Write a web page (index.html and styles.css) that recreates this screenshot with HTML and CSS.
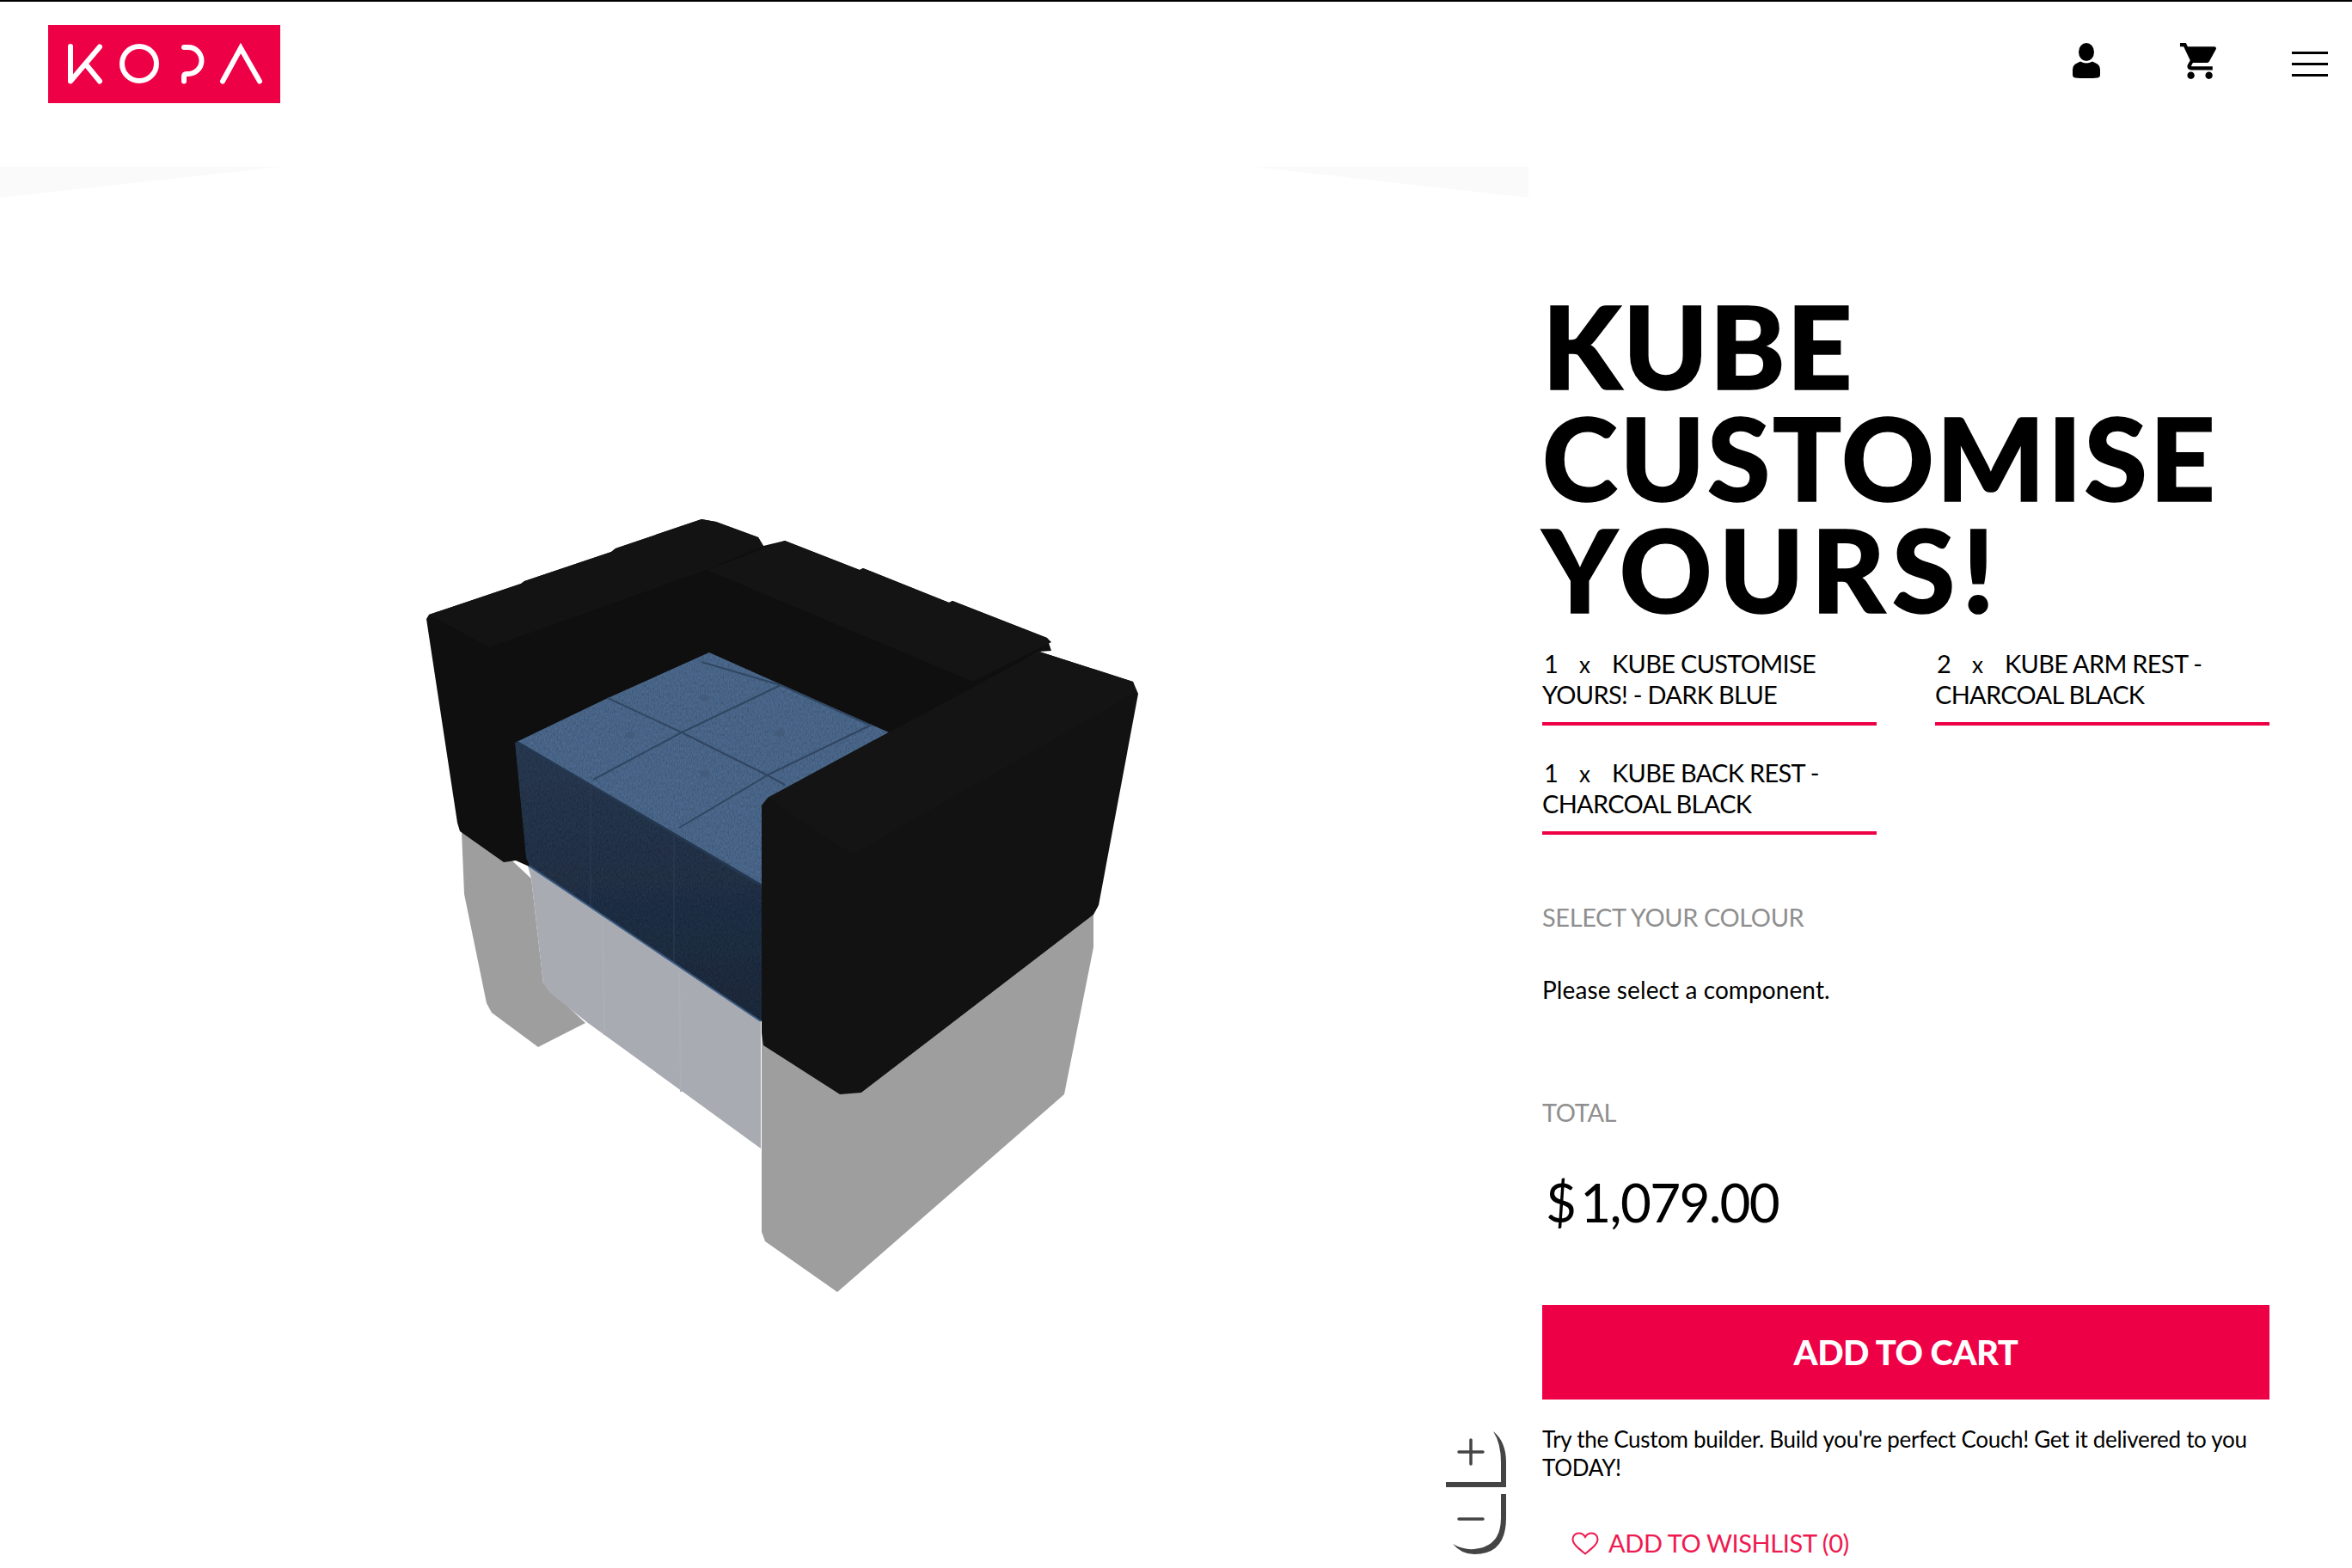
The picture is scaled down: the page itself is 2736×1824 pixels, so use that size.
FILE: index.html
```html
<!DOCTYPE html>
<html lang="en">
<head>
<meta charset="utf-8">
<title>KUBE CUSTOMISE YOURS!</title>
<link rel="stylesheet" href="styles.css">
</head>
<body>
<header class="site-header">
  <a class="logo" href="#" aria-label="KOPA">
    <svg class="logo-svg" viewBox="56 29 270 91" width="270" height="91">
      <rect x="56" y="29" width="270" height="91" fill="#ee0046"/>
      <g fill="none" stroke="#fff" stroke-width="6" stroke-linecap="round" stroke-linejoin="round">
        <path d="M82 54V94.500L116 54.500M100 75L116 94.500"/>
        <circle cx="162" cy="74" r="20"/>
        <path d="M214 55H219A15.500 15.500 0 0 1 219 86H217Q214 86 214 89V94.500"/>
      </g>
      <path d="M259 94.500L280 56L302 94.500" fill="none" stroke="#fff" stroke-width="6" stroke-linecap="round" stroke-linejoin="miter"/>
    </svg>
  </a>
  <nav class="header-icons">
    <svg class="icon-user" viewBox="0 0 32 41" width="32" height="41"><ellipse cx="16" cy="10.500" rx="9" ry="10.500"/><path d="M9 21.500Q16 25.500 23 21.500L27 23.500Q32 25.500 32 31V37Q32 40 29 40.500Q16 42 3 40.500Q0 40 0 37V31Q0 25.500 5 23.500Z"/></svg>
    <svg class="icon-cart" viewBox="1 2 20 20" width="42" height="42"><path d="M7 18c-1.100 0-1.990.900-1.990 2S5.900 22 7 22s2-.900 2-2-.900-2-2-2zM1 2v2h2l3.600 7.590-1.350 2.450c-.160.280-.250.610-.250.960 0 1.100.900 2 2 2h12v-2H7.420c-.140 0-.250-.110-.250-.250l.030-.120.900-1.630h7.450c.750 0 1.410-.410 1.750-1.030l3.580-6.490c.080-.140.120-.310.120-.480 0-.550-.450-1-1-1H5.210l-.940-2H1zm16 16c-1.100 0-1.990.900-1.990 2s.890 2 1.990 2 2-.900 2-2-.900-2-2-2z"/></svg>
    <div class="burger"><span></span><span></span><span></span></div>
  </nav>
</header>

<main class="product">
  <section class="stage">
    <svg class="viewer" viewBox="0 194 1778 1630" width="1778" height="1630">
      <defs>
        <filter id="fabric" x="0" y="0" width="100%" height="100%">
          <feTurbulence type="fractalNoise" baseFrequency="0.7 0.3" numOctaves="2" seed="4" result="n"/>
          <feColorMatrix in="n" type="matrix" values="0 0 0 0 0  0 0 0 0 0  0 0 0 0 0  0.700 0 0 0 -0.220" result="d"/>
          <feComposite in="d" in2="SourceGraphic" operator="in" result="c"/>
          <feMerge><feMergeNode in="SourceGraphic"/><feMergeNode in="c"/></feMerge>
        </filter>
        <linearGradient id="frontGrad" x1="0" y1="0" x2="0" y2="1">
          <stop offset="0" stop-color="#2b3c54"/><stop offset="1" stop-color="#1f2c3f"/>
        </linearGradient>
      </defs>
      <polygon points="0,194 326,194 0,230" fill="#fafafa"/>
      <polygon points="1457,194 1778,194 1778,230" fill="#fafafa"/>

      <!-- floor reflection -->
      <path d="M537 968L540 1040L566 1167L572 1178L626 1218L681 1190L632 1144L618 1022L589 995Z" fill="#9e9e9e"/>
      <path d="M612 1000L618 1022L632 1144L640 1155L684 1190L885 1336V1180Z" fill="#a8abb2"/>
      <path d="M701 1070L703 1204M790 1130L792 1270" fill="none" stroke="#abafb6" stroke-width="2"/>
      <path d="M886 1195L1002 1271L1272 1064V1102L1238 1273L974 1503L890 1444L886 1433Z" fill="#9e9e9e"/>

      <!-- rear and left body -->
      <path d="M496 720L499 715L606 679L610 676L711 642L716 638L816 604L833 607L882 625L888 635L913 629L1000 663L1004 661L1104 701L1108 699L1218 742L1223 757L1209 758L1030 860L886 940L620 1010L600 1001L586 1003L535 967L532 957Z" fill="#0f0f0f"/>
      <path d="M499 715L606 679L610 676L711 642L716 638L816 604L833 607L882 625L888 635L822 663L569 753Z" fill="#131313"/>
      <path d="M913 629L1000 663L1004 661L1104 701L1108 699L1218 742L1223 747L1132 793L822 663Z" fill="#141414"/>

      <!-- blue seat -->
      <polygon points="825,759 1034,852 896,927 886,937 886,1030 601,863 707,812" fill="#4d6a8f" filter="url(#fabric)"/>
      <path d="M599 863L886 1030V1188L617 1009L612 998Z" fill="url(#frontGrad)" filter="url(#fabric)"/>
      <g fill="none" stroke="#304762" stroke-width="2">
        <path d="M707 812L793 852L893 902L913 913"/>
        <path d="M908 797L793 852L690 907"/>
        <path d="M816 770L908 797L1011 843"/>
        <path d="M1014 843L896 900L790 963"/>
        <path d="M601 863L886 1030" stroke="#24384f" stroke-width="3"/>
        <path d="M687 915V1055M784 972V1120" stroke="#2a3d57" stroke-width="1"/>
        <path d="M615 1007L885 1188" stroke="#3a5a80"/>
      </g>
      <g fill="#435c7c">
        <ellipse cx="733" cy="855" rx="6" ry="4"/>
        <ellipse cx="820" cy="812" rx="6" ry="4"/>
        <ellipse cx="820" cy="900" rx="6" ry="4"/>
        <ellipse cx="907" cy="853" rx="6" ry="4"/>
      </g>

      <!-- right arm -->
      <path d="M1209 758L1318 793L1324 807L1278 1053L1272 1064L1002 1271L977 1273L888 1216L886 1201V937L893 928L1034 852Z" fill="#121212"/>
      <path d="M893 928L1034 852L1209 758L1318 793L1322 805L1200 875L994 993L977 985Z" fill="#141414"/>
    </svg>
    <div class="zoom-control">
      <svg viewBox="0 0 76 150" width="76" height="150">
        <g fill="#444">
          <path d="M55 2Q70 14 70 38V67H0V61H64V38Q64 16 55 2Z"/>
          <path d="M64 75H70V103Q70 145 33 145Q18 145 8 133Q20 140 33 139Q64 136 64 103Z"/>
        </g>
        <g stroke="#444" stroke-width="3.500" stroke-linecap="round">
          <path d="M15 26H43M29 12V40"/>
          <path d="M15 104H43"/>
        </g>
      </svg>
    </div>
  </section>

  <section class="details">
    <h1 class="title"><span class="title-short">KUBE</span><br>CUSTOMISE<br><span class="title-wide">YOURS!</span></h1>
    <ul class="components">
      <li class="component"><span class="qty">1</span><span class="times">x</span>KUBE CUSTOMISE<br>YOURS! - DARK BLUE</li>
      <li class="component"><span class="qty">2</span><span class="times">x</span>KUBE ARM REST -<br>CHARCOAL BLACK</li>
      <li class="component"><span class="qty">1</span><span class="times">x</span>KUBE BACK REST -<br>CHARCOAL BLACK</li>
    </ul>
    <h2 class="label colour-label">SELECT YOUR COLOUR</h2>
    <p class="hint">Please select a component.</p>
    <h2 class="label total-label">TOTAL</h2>
    <p class="price"><span class="currency">$</span>1,079.00</p>
    <button class="add-to-cart" type="button">ADD TO CART</button>
    <p class="blurb">Try the Custom builder. Build you're perfect Couch! Get it delivered to you<br>TODAY!</p>
    <a class="wishlist" href="#">
      <svg class="heart" viewBox="0 0 32 27" width="32" height="27"><path d="M16 25.500C8 19 1.500 14 1.500 8.500C1.500 4.500 4.500 1.500 8.500 1.500C11.500 1.500 14.500 3.200 16 6C17.500 3.200 20.500 1.500 23.500 1.500C27.500 1.500 30.500 4.500 30.500 8.500C30.500 14 24 19 16 25.500Z" fill="none" stroke="#ee1a50" stroke-width="2"/></svg>
      <span>ADD TO WISHLIST (0)</span>
    </a>
  </section>
</main>
</body>
</html>
```
FILE: styles.css
```css
* { box-sizing: border-box; }
html, body { margin: 0; padding: 0; }
body {
  height: 1824px;
  overflow: hidden;
  background: #fff;
  border-top: 2px solid #000;
  font-family: "Lato", "Open Sans", sans-serif;
  color: #000;
}
.site-header {
  display: flex;
  justify-content: space-between;
  align-items: flex-start;
  height: 192px;
  padding: 27px 28px 0 56px;
}
.logo, .logo-svg { display: block; }
.header-icons {
  display: flex;
  align-items: flex-start;
  padding-top: 21px;
}
.icon-user { display: block; margin-right: 93px; }
.icon-cart { display: block; margin-right: 88px; }
.burger {
  display: flex;
  flex-direction: column;
  gap: 10px;
  width: 42px;
  padding-top: 10px;
}
.burger span { display: block; height: 3px; background: #000; }
.product { display: flex; height: 1630px; }
.stage { position: relative; width: 1794px; flex: none; }
.viewer { display: block; }
.zoom-control {
  position: absolute;
  left: 1682px;
  top: 1469px;
  line-height: 0;
}
.details { width: 846px; flex: none; padding-top: 143px; }
.title {
  margin: 0;
  font-size: 133px;
  line-height: 130px;
  font-weight: 900;
  letter-spacing: 2.600px;
  -webkit-text-stroke: 1.500px #000;
  white-space: nowrap;
}
.title-short { letter-spacing: 1.500px; }
.title-wide { letter-spacing: 8px; }
.components {
  list-style: none;
  margin: 27px 0 0;
  padding: 0;
  display: grid;
  grid-template-columns: 389px 389px;
  column-gap: 68px;
  row-gap: 37px;
}
.component {
  font-size: 29px;
  line-height: 36px;
  letter-spacing: -.7px;
  padding-bottom: 14px;
  border-bottom: 4px solid #ee0046;
  white-space: nowrap;
}
.qty { display: inline-block; width: 43px; padding-left: 2px; line-height: 1; }
.times { display: inline-block; width: 38px; font-size: 26px; line-height: 1; }
.label {
  margin: 0;
  font-size: 29px;
  line-height: 36px;
  font-weight: 400;
  letter-spacing: -.4px;
  color: #8f8f8f;
}
.colour-label { margin-top: 78px; }
.hint { margin: 48px 0 0; font-size: 28px; line-height: 36px; letter-spacing: .1px; }
.total-label { margin-top: 107px; }
.price { margin: 51px 0 0; font-size: 62px; line-height: 70px; padding-left: 4px; letter-spacing: -1.700px; }
.currency { margin-right: 6px; }
.add-to-cart {
  display: block;
  width: 846px;
  height: 110px;
  margin-top: 85px;
  border: 0;
  padding: 0;
  background: #ee0046;
  color: #fff;
  font-family: inherit;
  font-size: 40px;
  font-weight: 900;
  letter-spacing: -.5px;
}
.blurb { margin: 30px 0 0; font-size: 26px; line-height: 33px; letter-spacing: -.3px; }
.wishlist {
  display: flex;
  align-items: center;
  gap: 11px;
  margin: 53px 0 0 34px;
  color: #ee1a50;
  font-size: 29px;
  line-height: 36px;
  letter-spacing: -.4px;
  text-decoration: none;
}
```
